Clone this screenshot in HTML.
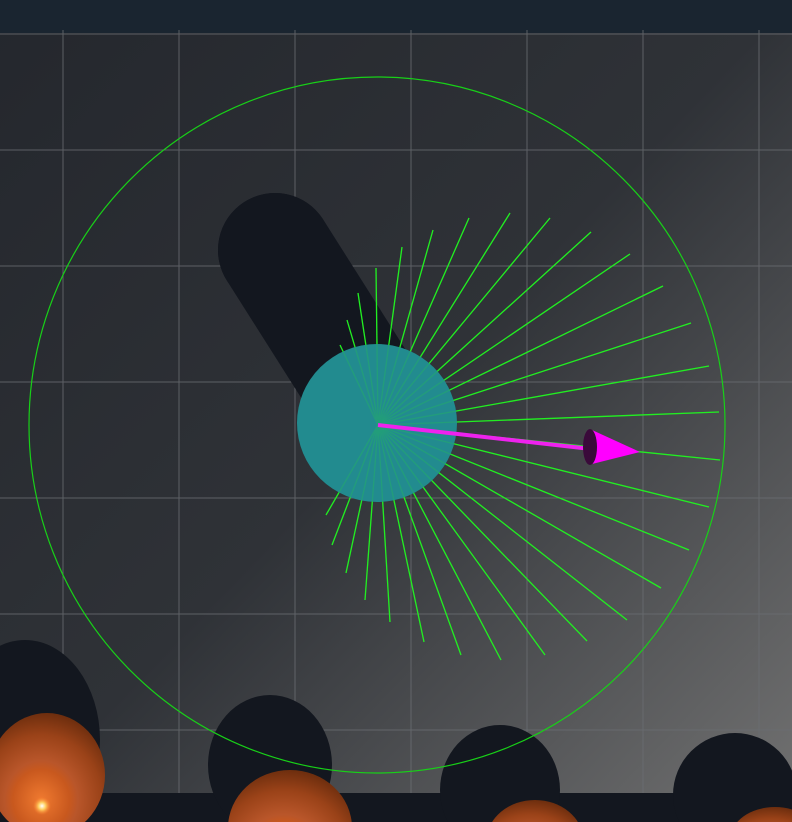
<!DOCTYPE html>
<html><head><style>html,body{margin:0;padding:0;width:792px;height:822px;overflow:hidden;background:#2a2d33}svg{display:block}</style></head>
<body>
<svg width="792" height="822" viewBox="0 0 792 822" xmlns="http://www.w3.org/2000/svg">
<defs>
<linearGradient id="bg" x1="0" y1="0" x2="1" y2="1">
<stop offset="0" stop-color="#24272d"/><stop offset="0.5" stop-color="#2f3237"/><stop offset="1" stop-color="#727272"/>
</linearGradient>
<radialGradient id="orb" cx="0.45" cy="0.7" r="0.7">
<stop offset="0" stop-color="#f07a30"/><stop offset="0.35" stop-color="#c8581e"/><stop offset="0.45" stop-color="#b9562a"/><stop offset="0.75" stop-color="#9a4218"/><stop offset="1" stop-color="#6e2e0e"/>
</radialGradient>
<radialGradient id="glow" cx="0.5" cy="0.5" r="0.5">
<stop offset="0" stop-color="#fff"/><stop offset="0.4" stop-color="#ffd060"/><stop offset="1" stop-color="#ff8030" stop-opacity="0"/>
</radialGradient>
</defs>
<rect width="792" height="822" fill="url(#bg)"/>
<rect width="792" height="33" fill="#1a2530"/>
<g stroke="#6a6d72" stroke-width="1" opacity="0.8">
<line x1="0" y1="34" x2="792" y2="34"/><line x1="0" y1="150" x2="792" y2="150"/><line x1="0" y1="266" x2="792" y2="266"/><line x1="0" y1="382" x2="792" y2="382"/><line x1="0" y1="498" x2="792" y2="498"/><line x1="0" y1="614" x2="792" y2="614"/><line x1="0" y1="730" x2="792" y2="730"/>
<line x1="63" y1="30" x2="63" y2="822"/><line x1="179" y1="30" x2="179" y2="822"/><line x1="295" y1="30" x2="295" y2="822"/><line x1="411" y1="30" x2="411" y2="822"/><line x1="527" y1="30" x2="527" y2="822"/><line x1="643" y1="30" x2="643" y2="822"/><line x1="759" y1="30" x2="759" y2="822"/>
</g>
<g fill="#13171f">
<circle cx="275" cy="250" r="57"/>
<line x1="275" y1="250" x2="370" y2="400" stroke="#13171f" stroke-width="114" stroke-linecap="round"/>
<rect x="0" y="793" width="792" height="29"/>
<ellipse cx="25" cy="740" rx="75" ry="100"/>
<ellipse cx="270" cy="765" rx="62" ry="70"/>
<ellipse cx="500" cy="790" rx="60" ry="65"/>
<ellipse cx="735" cy="795" rx="62" ry="62"/>
</g>
<g id="rays" stroke="#22ee22" stroke-width="1.3">
<line x1="378" y1="425" x2="376" y2="268"/><line x1="378" y1="425" x2="402" y2="247"/><line x1="378" y1="425" x2="433" y2="230"/><line x1="378" y1="425" x2="469" y2="218"/><line x1="378" y1="425" x2="510" y2="213"/><line x1="378" y1="425" x2="550" y2="218"/><line x1="378" y1="425" x2="591" y2="232"/><line x1="378" y1="425" x2="630" y2="254"/><line x1="378" y1="425" x2="663" y2="286"/><line x1="378" y1="425" x2="691" y2="323"/><line x1="378" y1="425" x2="709" y2="366"/><line x1="378" y1="425" x2="719" y2="412"/><line x1="378" y1="425" x2="720" y2="460"/><line x1="378" y1="425" x2="709" y2="507"/><line x1="378" y1="425" x2="689" y2="550"/><line x1="378" y1="425" x2="661" y2="588"/><line x1="378" y1="425" x2="627" y2="620"/><line x1="378" y1="425" x2="587" y2="641"/><line x1="378" y1="425" x2="545" y2="655"/><line x1="378" y1="425" x2="501" y2="660"/><line x1="378" y1="425" x2="461" y2="655"/><line x1="378" y1="425" x2="424" y2="642"/><line x1="378" y1="425" x2="390" y2="622"/><line x1="378" y1="425" x2="365" y2="600"/><line x1="378" y1="425" x2="346" y2="573"/><line x1="378" y1="425" x2="332" y2="545"/><line x1="378" y1="425" x2="326" y2="515"/><line x1="378" y1="425" x2="358" y2="293"/><line x1="378" y1="425" x2="347" y2="320"/><line x1="378" y1="425" x2="340" y2="345"/>
</g>
<ellipse cx="377" cy="423" rx="80" ry="79" fill="#228b8f"/>
<use href="#rays" opacity="0.18"/>
<ellipse cx="377" cy="425" rx="348" ry="348" fill="none" stroke="#18d018" stroke-width="1.2"/>
<line x1="378" y1="425" x2="600" y2="450" stroke="#ee22ee" stroke-width="4"/>
<polygon points="592,430 640,452 592,464" fill="#ff00ff"/>
<ellipse cx="590" cy="447" rx="7" ry="18" fill="#3a0a3a"/>
<ellipse cx="47" cy="775" rx="58" ry="62" fill="url(#orb)"/>
<circle cx="42" cy="806" r="9" fill="url(#glow)"/>
<ellipse cx="290" cy="828" rx="62" ry="58" fill="url(#orb)"/>
<ellipse cx="535" cy="840" rx="48" ry="40" fill="url(#orb)"/>
<ellipse cx="775" cy="840" rx="45" ry="33" fill="url(#orb)"/>
</svg>
</body></html>
